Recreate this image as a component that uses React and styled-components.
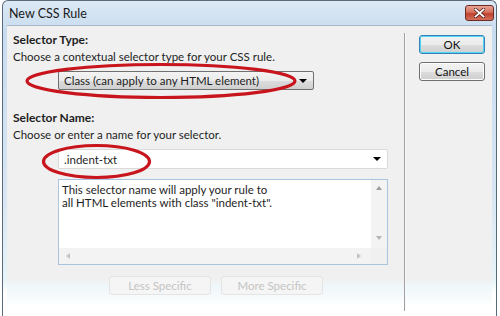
import React from "react";
import styled, { createGlobalStyle } from "styled-components";

const Global = createGlobalStyle`
  html, body {
    margin: 0;
    padding: 0;
    background: #ffffff;
  }
  body {
    font-family: Lato, "Open Sans", sans-serif;
    font-size: 11.5px;
    color: #1e1e1e;
  }
`;

const Frame = styled.div`
  position: relative;
  width: 495px;
  height: 316px;
  margin-left: 2px;
  box-sizing: border-box;
  border: 1px solid #5a6a7c;
  border-bottom: none;
  border-radius: 6px 6px 0 0;
  background: linear-gradient(180deg, #dce9f6 0%, #c9dcef 30px, #d8e6f3 60%, #e6f3f8 88%, #ffffff 93%);
  padding: 0 4px;
  overflow: hidden;
`;

const TitleBar = styled.div`
  display: flex;
  align-items: center;
  justify-content: space-between;
  height: 24px;
  padding-left: 2px;
`;

const Title = styled.span`
  font-size: 12.5px;
  color: #1a1a1a;
`;

const CloseBtn = styled.div`
  width: 29px;
  height: 16px;
  margin-top: -1px;
  margin-right: -2px;
  box-sizing: border-box;
  border: 1px solid #6b2a22;
  border-radius: 3px;
  background: linear-gradient(180deg, #e8a595 0%, #d4705c 45%, #c0402c 55%, #d3705c 100%);
  display: flex;
  align-items: center;
  justify-content: center;
`;

const Client = styled.div`
  display: flex;
  height: 292px;
  border-top: 1px solid #a8b8c8;
  background: linear-gradient(180deg, #f0f0f0 0%, #f0f0f0 87%, #eef7fa 89%, #f7fbfc 93%, #ffffff 96%);
`;

const Main = styled.div`
  width: 397px;
  padding: 6px 0 0 6px;
  box-sizing: border-box;
  position: relative;
`;

const Heading = styled.div`
  font-weight: bold;
  font-size: 12px;
  margin-top: ${(p) => p.$top || 0}px;
  height: 15px;
`;

const Desc = styled.div`
  margin-top: 3px;
  height: 15px;
`;

const Select = styled.div`
  margin: ${(p) => p.$top}px 0 0 45px;
  width: ${(p) => p.$width}px;
  height: ${(p) => p.$height}px;
  box-sizing: border-box;
  border: 1px solid ${(p) => (p.$light ? "#dadada" : "#707070")};
  border-radius: 2px;
  background: ${(p) => (p.$light ? "#ffffff" : "linear-gradient(180deg, #f3f3f3 0%, #ebebeb 50%, #dddddd 51%, #cfcfcf 100%)")};
  display: flex;
  align-items: center;
  justify-content: space-between;
  padding: 0 6px 0 5px;
`;

const Arrow = styled.span`
  width: 0;
  height: 0;
  border-left: 4px solid transparent;
  border-right: 4px solid transparent;
  border-top: 4px solid #000;
`;

const TextBox = styled.div`
  margin: 10px 0 0 45px;
  width: 330px;
  height: 86px;
  box-sizing: border-box;
  border: 1px solid #abc4de;
  background: #ffffff;
  display: grid;
  grid-template-columns: 1fr 16px;
  grid-template-rows: 1fr 16px;
`;

const BoxText = styled.div`
  padding: 3px 3px;
  line-height: 13px;
`;

const VScroll = styled.div`
  background: #f3f3f3;
  display: flex;
  flex-direction: column;
  align-items: center;
  justify-content: space-between;
  padding: 6px 0 8px;
`;

const HScroll = styled.div`
  background: #f3f3f3;
  display: flex;
  align-items: center;
  justify-content: space-between;
  padding: 0 10px 0 7px;
`;

const Corner = styled.div`
  background: #f0f0f0;
`;

const Tri = styled.span`
  width: 0;
  height: 0;
  border: 3px solid transparent;
  ${(p) => p.$dir === "up" && "border-bottom: 4px solid #9c9c9c; border-top: none;"}
  ${(p) => p.$dir === "down" && "border-top: 4px solid #b4b4b4; border-bottom: none;"}
  ${(p) => p.$dir === "left" && "border-right: 4px solid #c4c4c4; border-left: none;"}
  ${(p) => p.$dir === "right" && "border-left: 4px solid #c4c4c4; border-right: none;"}
`;

const SpecRow = styled.div`
  display: flex;
  gap: 10px;
  margin: 11px 0 0 96px;
`;

const GhostButton = styled.div`
  width: 102px;
  height: 19px;
  box-sizing: border-box;
  border: 1px solid #e4e4e4;
  border-radius: 3px;
  background: #f5f5f5;
  color: #c4c4c4;
  display: flex;
  align-items: center;
  justify-content: center;
`;

const Separator = styled.div`
  width: 1px;
  margin-top: 7px;
  height: 278px;
  background: #a0a0a0;
  border-right: 1px solid #fafafa;
`;

const Side = styled.div`
  display: flex;
  flex-direction: column;
  gap: 8px;
  padding: 9px 0 0 13px;
`;

const Button = styled.div`
  width: 66px;
  height: 19px;
  box-sizing: border-box;
  border: 1px solid ${(p) => (p.$default ? "#3c7fb1" : "#707070")};
  box-shadow: ${(p) => (p.$default ? "inset 0 0 0 1px #48d8fa" : "inset 0 0 0 1px #fcfcfc")};
  border-radius: 3px;
  background: linear-gradient(180deg, #f2f2f2 0%, #ebebeb 50%, #dddddd 51%, #cfcfcf 100%);
  display: flex;
  align-items: center;
  justify-content: center;
  color: #111;
`;

const Marks = styled.svg`
  position: absolute;
  left: 0;
  top: 0;
  pointer-events: none;
`;

export default function App() {
  return (
    <>
      <Global />
      <Frame>
        <TitleBar>
          <Title>New CSS Rule</Title>
          <CloseBtn>
            <svg width="11" height="10" viewBox="0 0 11 10">
              <path d="M1.5 1.5 L9.5 8.5 M9.5 1.5 L1.5 8.5" stroke="#4a1a14" strokeWidth="3.2" strokeLinecap="square" />
              <path d="M1.5 1.5 L9.5 8.5 M9.5 1.5 L1.5 8.5" stroke="#ffffff" strokeWidth="1.8" strokeLinecap="square" />
            </svg>
          </CloseBtn>
        </TitleBar>
        <Client>
          <Main>
            <Heading>Selector Type:</Heading>
            <Desc>Choose a contextual selector type for your CSS rule.</Desc>
            <Select $top={6} $width={256} $height={19}>
              <span>Class (can apply to any HTML element)</span>
              <Arrow />
            </Select>
            <Heading $top={20}>Selector Name:</Heading>
            <Desc>Choose or enter a name for your selector.</Desc>
            <Select $top={6} $width={330} $height={20} $light>
              <span>.indent-txt</span>
              <Arrow />
            </Select>
            <TextBox>
              <BoxText>
                This selector name will apply your rule to
                <br />
                all HTML elements with class "indent-txt".
              </BoxText>
              <VScroll>
                <Tri $dir="up" />
                <Tri $dir="down" />
              </VScroll>
              <HScroll>
                <Tri $dir="left" />
                <Tri $dir="right" />
              </HScroll>
              <Corner />
            </TextBox>
            <SpecRow>
              <GhostButton>Less Specific</GhostButton>
              <GhostButton>More Specific</GhostButton>
            </SpecRow>
            <Marks width="397" height="292" viewBox="0 0 397 292">
              <ellipse cx="154" cy="55" rx="134" ry="16.5" fill="none" stroke="#c8141c" strokeWidth="3.2" />
              <ellipse cx="89.5" cy="135.5" rx="53" ry="16" fill="none" stroke="#c8141c" strokeWidth="3.2" />
            </Marks>
          </Main>
          <Separator />
          <Side>
            <Button $default>OK</Button>
            <Button>Cancel</Button>
          </Side>
        </Client>
      </Frame>
    </>
  );
}
